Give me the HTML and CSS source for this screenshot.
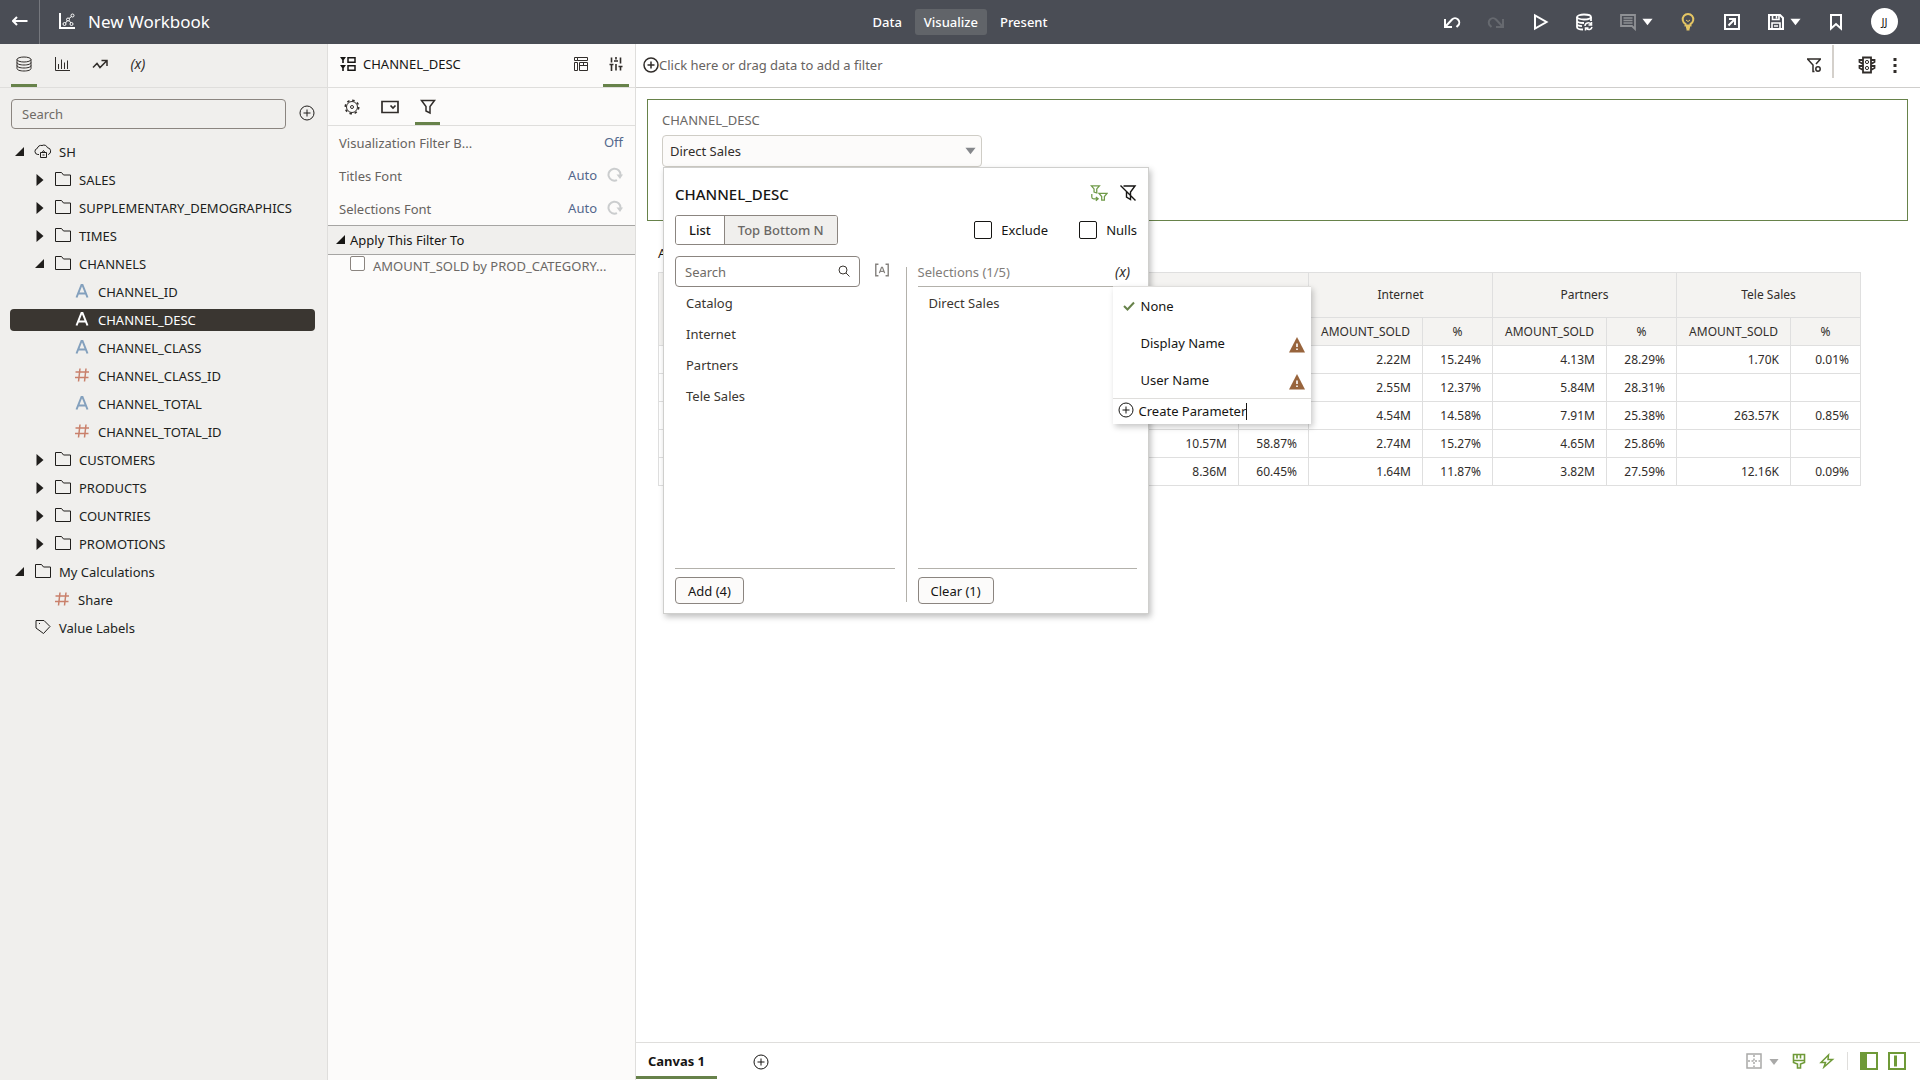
FILE: index.html
```html
<!DOCTYPE html>
<html lang="en">
<head>
<meta charset="UTF-8">
<meta name="viewport" content="width=device-width, initial-scale=1.0">
<title>New Workbook</title>
<link rel="stylesheet" href="styles.css">
</head>
<body>
  <!-- Shared icons -->
  <svg class="sprite" aria-hidden="true">
    <symbol id="plus" viewBox="0 0 16 16"><circle cx="8" cy="8" r="7"/><path d="M8 4.500v7M4.500 8h7"/></symbol>
    <symbol id="folder" viewBox="0 0 18 16"><path d="M1.500 1.500h6l2 2.500h7v10.500h-15z"/></symbol>
    <symbol id="closed" viewBox="0 0 16 16"><path class="fill" d="M4.500 2l7 6-7 6z"/></symbol>
    <symbol id="open" viewBox="0 0 16 16"><path class="fill" d="M12 3v9H3z"/></symbol>
    <symbol id="attr" viewBox="0 0 16 16"><path d="M2.500 14.500L7.500 2h1l5 12.500M4.500 10.500h7"/></symbol>
    <symbol id="measure" viewBox="0 0 16 16"><path d="M6 1.500l-1.500 13M12 1.500l-1.500 13M1.500 5h13.500M1 10.500h13.500"/></symbol>
    <symbol id="caret" viewBox="0 0 12 8"><path class="fill" d="M.5 .5h11L6 7.500z"/></symbol>
    <symbol id="reset" viewBox="0 0 16 16"><path d="M10 13.200A6 6 0 1 1 13.500 8"/><path class="fill" d="M9.500 7.500h6.500l-3 4.500z"/></symbol>
    <symbol id="warn" viewBox="0 0 16 16"><path fill="#98643c" stroke="none" d="M8 0l8 15.500H0z"/><path stroke="#fff" stroke-width="1.600" d="M8 6.500v3.500M8 11.500v1.500"/></symbol>
  </svg>

  <header class="topbar">
    <div class="topbar-left">
      <button class="back" aria-label="Go back"><svg viewBox="0 0 16 16"><path stroke-width="2" d="M1 8h14.500M5 4L1 8l4 4"/></svg></button>
      <svg class="wb-icon" viewBox="0 0 18 18"><path stroke-width="2" d="M2 1v15h15"/><circle cx="6.500" cy="12" r="1.500"/><circle cx="10" cy="7.500" r="1.500"/><circle cx="13.500" cy="12" r="1.500"/><circle cx="14.500" cy="3.500" r="1.500"/><path d="M7.500 11l2-2.500M11 6.500l2.500-2M11 8.500l2 2.500"/></svg>
      <h1>New Workbook</h1>
    </div>
    <nav class="modes">
      <button>Data</button>
      <button class="active">Visualize</button>
      <button>Present</button>
    </nav>
    <div class="topbar-right">
      <button aria-label="Undo"><svg viewBox="0 0 18 18"><path stroke-width="2" d="M2 6v8h7M2.500 13.500L9 6.500a4 4 0 0 1 6 6l-1.500 1.500"/></svg></button>
      <button class="dim" aria-label="Redo"><svg viewBox="0 0 18 18"><path stroke-width="2" d="M16 6v8H9M15.500 13.500L9 6.500a4 4 0 0 0-6 6l1.500 1.500"/></svg></button>
      <button aria-label="Preview"><svg viewBox="0 0 18 18"><path stroke-width="2" d="M4 2.500v13L15.500 9z"/></svg></button>
      <button aria-label="Refresh data"><svg viewBox="0 0 18 18"><ellipse cx="9" cy="4" rx="7" ry="2.500" stroke-width="1.800"/><path stroke-width="1.800" d="M2 4v10c0 1.500 3 2.500 6 2.500M2 7.500c0 1.500 3 2.500 7 2.500M2 11c0 1.200 2.500 2 5 2.200M16 4v4"/><path stroke-width="1.500" d="M10 13a3.200 3.200 0 0 1 6-1.500M16.500 9v3h-3M17 14a3.200 3.200 0 0 1-5.500 1.500M10.500 17.500V15h3"/></svg></button>
      <div class="split grey">
        <button aria-label="Comments"><svg viewBox="0 0 18 18"><path stroke-width="1.800" d="M2 2h14v14l-3-3H2z"/><path stroke-width="1.300" d="M4.500 5h9M4.500 7.500h9M4.500 10h9"/></svg></button>
        <button class="drop" aria-label="Comment options"><svg><use href="#caret"/></svg></button>
      </div>
      <button class="gold" aria-label="Insights"><svg viewBox="0 0 18 18"><path stroke-width="2" d="M6.500 12.500V11A5.300 5.300 0 1 1 11.500 11v1.500zM7 14.500h4M7.500 16.500h3"/><path d="M7 7l2 1.500L11 7"/></svg></button>
      <button aria-label="Export"><svg viewBox="0 0 18 18"><path stroke-width="2" d="M2 2h14v14H2zM6 6h6v6M12 6l-6.500 6.500"/></svg></button>
      <div class="split">
        <button aria-label="Save"><svg viewBox="0 0 18 18"><path stroke-width="2" d="M2 2h11l3 3v11H2z"/><path stroke-width="1.600" d="M5.500 2v4.500h6.500V2M9.500 3v2.500M5 16v-6h8v6M7 13h4"/></svg></button>
        <button class="drop" aria-label="Save options"><svg><use href="#caret"/></svg></button>
      </div>
      <button aria-label="Bookmark"><svg viewBox="0 0 18 18"><path stroke-width="2" d="M4 2h10v13.500l-5-4.500-5 4.500z"/></svg></button>
      <button class="avatar">JJ</button>
    </div>
  </header>

  <div class="workspace">
    <!-- Data panel -->
    <aside class="data-panel">
      <div class="tabs">
        <button class="active" aria-label="Data"><svg viewBox="0 0 16 16"><ellipse cx="8" cy="3.500" rx="7" ry="2.500"/><path d="M1 3.500v9C1 14 4 15 8 15s7-1 7-2.500v-9M1 6.500C1 8 4 9 8 9s7-1 7-2.500M1 9.500C1 11 4 12 8 12s7-1 7-2.500"/></svg></button>
        <button aria-label="Visualizations"><svg viewBox="0 0 16 16"><path d="M1.500 1v13.500H16M4.500 13V8M7.500 13V3.500M10.500 13V6.500M13.500 13V4.500"/></svg></button>
        <button aria-label="Analytics"><svg viewBox="0 0 16 16"><path stroke-width="1.500" d="M1 11.500l4-4 3 4L14.500 5M9.500 4.500h5.500V10"/></svg></button>
        <button class="fx" aria-label="Parameters">(x)</button>
      </div>
      <div class="search-row">
        <input type="text" placeholder="Search" aria-label="Search data">
        <button aria-label="Add data"><svg><use href="#plus"/></svg></button>
      </div>
      <ul class="tree">
        <li><svg class="toggle"><use href="#open"/></svg><svg viewBox="0 0 18 16"><path d="M5 11.500H3.800A3.100 3.100 0 0 1 3.300 5.400 3.800 3.800 0 0 1 8 2.500 4.300 4.300 0 0 1 13.500 4.700a3.500 3.500 0 0 1 .8 6.800H14"/><path d="M6.500 9.500h6v5h-6zM8 9.500l1.500-2 1.500 2M8.500 12h2"/></svg>SH</li>
        <li class="l1"><svg class="toggle"><use href="#closed"/></svg><svg><use href="#folder"/></svg>SALES</li>
        <li class="l1"><svg class="toggle"><use href="#closed"/></svg><svg><use href="#folder"/></svg>SUPPLEMENTARY_DEMOGRAPHICS</li>
        <li class="l1"><svg class="toggle"><use href="#closed"/></svg><svg><use href="#folder"/></svg>TIMES</li>
        <li class="l1"><svg class="toggle"><use href="#open"/></svg><svg><use href="#folder"/></svg>CHANNELS</li>
        <li class="l2"><svg class="attr"><use href="#attr"/></svg>CHANNEL_ID</li>
        <li class="l2 selected"><svg class="attr"><use href="#attr"/></svg>CHANNEL_DESC</li>
        <li class="l2"><svg class="attr"><use href="#attr"/></svg>CHANNEL_CLASS</li>
        <li class="l2"><svg class="measure"><use href="#measure"/></svg>CHANNEL_CLASS_ID</li>
        <li class="l2"><svg class="attr"><use href="#attr"/></svg>CHANNEL_TOTAL</li>
        <li class="l2"><svg class="measure"><use href="#measure"/></svg>CHANNEL_TOTAL_ID</li>
        <li class="l1"><svg class="toggle"><use href="#closed"/></svg><svg><use href="#folder"/></svg>CUSTOMERS</li>
        <li class="l1"><svg class="toggle"><use href="#closed"/></svg><svg><use href="#folder"/></svg>PRODUCTS</li>
        <li class="l1"><svg class="toggle"><use href="#closed"/></svg><svg><use href="#folder"/></svg>COUNTRIES</li>
        <li class="l1"><svg class="toggle"><use href="#closed"/></svg><svg><use href="#folder"/></svg>PROMOTIONS</li>
        <li><svg class="toggle"><use href="#open"/></svg><svg><use href="#folder"/></svg>My Calculations</li>
        <li class="l1 leaf"><svg class="measure"><use href="#measure"/></svg>Share</li>
        <li class="leaf"><svg viewBox="0 0 18 16"><path d="M2 1.500h8l6 6-6.500 7L2 9z"/><path d="M5 4.500h1"/></svg>Value Labels</li>
      </ul>
    </aside>

    <!-- Properties panel -->
    <aside class="props-panel">
      <div class="tabs props-head">
        <svg viewBox="0 0 16 16"><path class="fill" d="M0 1h6L3.800 4v3H2.200V4zM0 9h6l-2.200 3v3H2.200v-3z"/><path stroke-width="1.500" d="M8 1.800h7v4.500H8zM8 9.800h7v4.500H8z"/></svg>
        <h2>CHANNEL_DESC</h2>
        <button aria-label="Grammar"><svg viewBox="0 0 16 16"><path d="M1.500 1.500h3v3h-3zM4.500 1.500h10v3h-10zM1.500 6.500h3v8h-3zM6.500 6.500h8v8h-8zM6.500 9.500h8M10.500 6.500v3"/></svg></button>
        <button class="active" aria-label="Properties"><svg viewBox="0 0 16 16"><path stroke-width="1.600" d="M3.500 1.500v5M3.500 9v6M8 1v2.500M8 8v6.500M12.500 1.500v6M12.500 11v3.500M1.500 8.500h4M6 5h4M10.500 10.500h4"/></svg></button>
      </div>
      <div class="subtabs">
        <button aria-label="General"><svg viewBox="0 0 16 16"><circle cx="8" cy="8" r="5.500"/><circle cx="8" cy="8" r="1.500"/><circle cx="8" cy="8" r="6.700" stroke-dasharray="2.500 2.760" stroke-width="1.600"/></svg></button>
        <button aria-label="Control"><svg viewBox="0 0 18 16"><path stroke-width="1.700" d="M1 2.500h16v11H1zM9.500 6.500l2.500 2.500 2.500-2.500"/></svg></button>
        <button class="active" aria-label="Filter"><svg viewBox="0 0 16 16"><path stroke-width="1.500" d="M1.500 1.500h13L10 7.500V14L6 12V7.500z"/></svg></button>
      </div>
      <div class="prop"><span>Visualization Filter B...</span><a href="#">Off</a></div>
      <div class="prop"><span>Titles Font</span><a href="#">Auto</a><button aria-label="Reset titles font"><svg><use href="#reset"/></svg></button></div>
      <div class="prop"><span>Selections Font</span><a href="#">Auto</a><button aria-label="Reset selections font"><svg><use href="#reset"/></svg></button></div>
      <button class="section"><svg><use href="#open"/></svg>Apply This Filter To</button>
      <div class="apply"><input type="checkbox" id="applyTo"><label for="applyTo">AMOUNT_SOLD by PROD_CATEGORY...</label></div>
    </aside>

    <!-- Canvas -->
    <main class="canvas">
      <div class="filter-bar">
        <button class="add-filter"><svg><use href="#plus"/></svg>Click here or drag data to add a filter</button>
        <button aria-label="Filter settings"><svg viewBox="0 0 16 16"><path stroke-width="1.500" d="M1 2h14M1.500 2L7 8v6.500h1.500M14.500 2L10 7"/><circle cx="12" cy="12" r="2.200" stroke-width="1.500"/></svg></button>
        <div class="bar-line"></div>
        <button aria-label="Brushing"><svg viewBox="0 0 18 18"><path stroke-width="1.800" d="M5 1.500h8v15H5zM5 4H1.500v2L5 8M5 10H1.500v2L5 14M13 4h3.500v2L13 8M13 10h3.500v2L13 14"/><circle cx="9" cy="6" r="1.600"/><circle cx="9" cy="12" r="1.600"/></svg></button>
        <button aria-label="Menu"><svg viewBox="0 0 16 16"><path class="fill" d="M6.500 1h3v3h-3zM6.500 7h3v3h-3zM6.500 13h3v3h-3z"/></svg></button>
      </div>

      <div class="stage">
        <section class="filter-viz">
          <label for="channel">CHANNEL_DESC</label>
          <div class="dropdown">
            <select id="channel"><option>Direct Sales</option></select>
            <svg><use href="#caret"/></svg>

            <div class="popup">
              <div class="popup-head">
                <h3>CHANNEL_DESC</h3>
                <button class="green" aria-label="Limit values"><svg viewBox="0 0 20 18"><path stroke-width="1.400" d="M1.500 1h9L7.500 4.500V9l-3-1V4.500zM10 9.500h9l-3 3.500v4h-3v-4zM2 10v3.500c0 1.500 1 2 2 2h4.500M6.500 13.500l2.500 2-2.500 2"/></svg></button>
                <button aria-label="Clear filter"><svg viewBox="0 0 18 18"><path stroke-width="1.400" d="M4.500 2H16l-4.500 6v7.500L7.500 13V7M1.500 1.500l15 15"/></svg></button>
              </div>
              <div class="popup-modes">
                <div class="segmented"><button class="on">List</button><button>Top Bottom N</button></div>
                <label><input type="checkbox">Exclude</label>
                <label><input type="checkbox">Nulls</label>
              </div>
              <div class="lists">
                <div class="column">
                  <div class="column-head">
                    <div class="find">
                      <input type="text" placeholder="Search" aria-label="Search values">
                      <svg viewBox="0 0 12 12"><circle cx="5" cy="5" r="4"/><path d="M8 8l3.500 3.500"/></svg>
                    </div>
                    <button class="match" aria-label="Match case"><svg viewBox="0 0 18 16"><path stroke-width="1.600" d="M5 1.500H2v13h3M13 1.500h3v13h-3"/><path stroke-width="1.400" d="M6 11.500L8.500 5h1L12 11.500M7 9.500h4"/></svg></button>
                  </div>
                  <ul>
                    <li>Catalog</li>
                    <li>Internet</li>
                    <li>Partners</li>
                    <li>Tele Sales</li>
                  </ul>
                  <button class="action">Add (4)</button>
                </div>
                <div class="divider"></div>
                <div class="column">
                  <div class="column-head ruled">
                    <span>Selections (1/5)</span>
                    <button class="fx" aria-label="Bind to parameter">(x)</button>
                    <div class="menu">
                      <button><svg class="check" viewBox="0 0 12 12"><path stroke-width="2" d="M1 6l3.500 3.500L11 2.500"/></svg>None</button>
                      <button class="indent">Display Name<svg class="warn"><use href="#warn"/></svg></button>
                      <button class="indent">User Name<svg class="warn"><use href="#warn"/></svg></button>
                      <button class="create"><svg><use href="#plus"/></svg><span>Create Parameter</span></button>
                    </div>
                  </div>
                  <ul>
                    <li>Direct Sales</li>
                  </ul>
                  <button class="action">Clear (1)</button>
                </div>
              </div>
            </div>
          </div>
        </section>

        <section class="table-viz">
          <h2>AMOUNT_SOLD by PROD_CATEGORY</h2>
          <table>
            <colgroup>
              <col>
              <col class="amount"><col class="pct">
              <col class="amount"><col class="pct">
              <col class="amount"><col class="pct">
              <col class="amount"><col class="pct">
            </colgroup>
            <thead>
              <tr><th rowspan="2"></th><th colspan="2"></th><th colspan="2">Internet</th><th colspan="2">Partners</th><th colspan="2">Tele Sales</th></tr>
              <tr><th></th><th></th><th>AMOUNT_SOLD</th><th>%</th><th>AMOUNT_SOLD</th><th>%</th><th>AMOUNT_SOLD</th><th>%</th></tr>
            </thead>
            <tbody>
              <tr><td></td><td></td><td></td><td>2.22M</td><td>15.24%</td><td>4.13M</td><td>28.29%</td><td>1.70K</td><td>0.01%</td></tr>
              <tr><td></td><td></td><td></td><td>2.55M</td><td>12.37%</td><td>5.84M</td><td>28.31%</td><td></td><td></td></tr>
              <tr><td></td><td></td><td></td><td>4.54M</td><td>14.58%</td><td>7.91M</td><td>25.38%</td><td>263.57K</td><td>0.85%</td></tr>
              <tr><td></td><td>10.57M</td><td>58.87%</td><td>2.74M</td><td>15.27%</td><td>4.65M</td><td>25.86%</td><td></td><td></td></tr>
              <tr><td></td><td>8.36M</td><td>60.45%</td><td>1.64M</td><td>11.87%</td><td>3.82M</td><td>27.59%</td><td>12.16K</td><td>0.09%</td></tr>
            </tbody>
          </table>
        </section>
      </div>

      <footer class="canvas-tabs">
        <button class="canvas-tab">Canvas 1</button>
        <button class="add-canvas" aria-label="Add canvas"><svg><use href="#plus"/></svg></button>
        <div class="view-tools">
          <button class="muted" aria-label="Grid"><svg viewBox="0 0 16 16"><path stroke-width="1.500" d="M1 1h14v14H1z"/><path stroke-width="1.500" stroke-dasharray="2 1.500" d="M8 2v12M2 8h12"/></svg></button>
          <button class="muted drop" aria-label="Grid options"><svg><use href="#caret"/></svg></button>
          <button aria-label="Format"><svg viewBox="0 0 16 16"><path stroke-width="1.600" d="M2.500 1.500h11v8L9.500 11v4h-3v-4l-4-1.500zM6 1.500v4M9.500 1.500v4M2.500 7.500h11"/></svg></button>
          <button aria-label="Auto apply"><svg viewBox="0 0 16 16"><path stroke-width="1.500" d="M9.500 2L2 9.500h4.500L5 14l8.500-7.500H9z"/></svg></button>
          <div class="tool-line"></div>
          <button class="big" aria-label="Toggle data panel"><svg viewBox="0 0 18 18"><path stroke-width="2" d="M1 1h16v16H1z"/><path class="fill" d="M1 1h6v16H1z"/></svg></button>
          <button class="big" aria-label="Toggle grammar panel"><svg viewBox="0 0 18 18"><path stroke-width="2" d="M1 1h16v16H1z"/><path class="fill" d="M6 3.500h3v11H6z"/></svg></button>
        </div>
      </footer>
    </main>
  </div>
</body>
</html>
```
FILE: styles.css
```css
* {
  box-sizing: border-box;
}

body {
  margin: 0;
  height: 100vh;
  display: flex;
  flex-direction: column;
  font-family: "Noto Sans", "Open Sans", sans-serif;
  font-size: 13px;
  line-height: 20px;
  color: #161513;
  background: #fff;
  overflow: hidden;
}

h1, h2, h3, ul {
  margin: 0;
  padding: 0;
  font-weight: normal;
}

ul {
  list-style: none;
}

button {
  padding: 0;
  border: 0;
  background: none;
  font: inherit;
  color: inherit;
  display: flex;
  align-items: center;
  cursor: pointer;
}

input, select {
  font: inherit;
  color: inherit;
  margin: 0;
}

a {
  text-decoration: none;
}

svg {
  display: block;
  width: 16px;
  height: 16px;
  flex: none;
  fill: none;
  stroke: currentColor;
}

.fill {
  fill: currentColor;
  stroke: none;
}

.sprite {
  position: absolute;
  width: 0;
  height: 0;
}

.fx {
  font-size: 14px;
  font-style: italic;
}

/* Top bar */
.topbar {
  height: 44px;
  flex: none;
  display: grid;
  grid-template-columns: 1fr auto 1fr;
  align-items: center;
  background: #4a4d55;
  color: #fff;
}

.topbar-left {
  display: flex;
  align-items: center;
  height: 100%;
}

.back {
  width: 40px;
  height: 100%;
  padding-bottom: 2px;
  justify-content: center;
  border-right: 1px solid #75777d;
}

.wb-icon {
  width: 18px;
  height: 18px;
  margin: 0 12px 2px 18px;
}

.topbar h1 {
  font-size: 17px;
}

.modes {
  display: flex;
  gap: 4px;
}

.modes button {
  height: 26px;
  padding: 0 9px;
  border-radius: 3px;
  font-weight: 500;
}

.modes .active {
  background: #616469;
}

.topbar-right {
  display: flex;
  align-items: center;
  justify-content: flex-end;
  gap: 26px;
  padding: 0 22px 1px 0;
}

.topbar-right svg {
  width: 18px;
  height: 18px;
}

.split {
  display: flex;
  align-items: center;
  gap: 5px;
}

.topbar-right .drop svg {
  width: 11px;
  height: 8px;
}

.dim {
  color: #66696f;
}

.grey button:first-child {
  color: #8f9195;
}

.gold {
  color: #e5c664;
}

.avatar {
  width: 27px;
  height: 27px;
  border-radius: 50%;
  justify-content: center;
  background: #fff;
  color: #161513;
  font-size: 11px;
}

/* Side panels */
.workspace {
  flex: 1;
  min-height: 0;
  display: flex;
}

.data-panel {
  width: 328px;
  flex: none;
  background: #f0efed;
  border-right: 1px solid #dfdedc;
  color: #201e1c;
}

.tabs {
  height: 44px;
  display: flex;
  border-bottom: 1px solid #dfdedc;
  padding-left: 11px;
  gap: 12px;
}

.tabs button {
  width: 26px;
  padding-bottom: 4px;
  justify-content: center;
  border-bottom: 3px solid transparent;
  border-top: 3px solid transparent;
  color: #312d2a;
}

.tabs .active, .subtabs .active {
  border-bottom-color: #67824a;
}

.search-row {
  display: flex;
  align-items: center;
  gap: 13px;
  padding: 11px 12px 11px 11px;
}

.search-row input {
  flex: 1;
  min-width: 0;
  height: 30px;
  padding: 0 10px;
  border: 1px solid #8b8580;
  border-radius: 4px;
  background: transparent;
}

.search-row button {
  padding-bottom: 3px;
}

::placeholder {
  color: #6f6b66;
  opacity: 1;
}

.tree {
  padding-top: 1px;
}

.tree li {
  height: 22px;
  margin: 0 12px 6px 10px;
  display: flex;
  align-items: center;
  gap: 7px;
  border-radius: 4px;
}

.tree svg {
  width: 18px;
  margin-bottom: 2px;
}

.tree .toggle {
  width: 16px;
  margin: 0 -1px 0 2px;
}

.tree .l1 {
  padding-left: 20px;
}

.tree .l2 {
  padding-left: 63px;
}

.tree .leaf {
  padding-left: 24px;
}

.tree .l1.leaf {
  padding-left: 43px;
}

.tree .attr {
  color: #83a0bd;
  stroke-width: 2;
}

.tree .measure {
  color: #c9806b;
  stroke-width: 1.5;
}

.tree .selected, .tree .selected .attr {
  background: #3a3631;
  color: #fff;
}

.props-panel {
  width: 308px;
  flex: none;
  background: #fcfbfa;
  border-right: 1px solid #dfdedc;
}

.props-head {
  align-items: center;
  padding: 0 6px 0 12px;
  gap: 9px;
}

.props-head h2 {
  flex: 1;
  margin: 0 0 3px -2px;
  font-size: 13px;
}

.props-head > svg {
  margin-bottom: 3px;
}

.props-head button {
  height: 100%;
}

.subtabs {
  height: 38px;
  display: flex;
  gap: 13px;
  padding-left: 11px;
  border-bottom: 1px solid #dfdedc;
}

.subtabs button {
  width: 25px;
  justify-content: center;
  border-top: 3px solid transparent;
  border-bottom: 3px solid transparent;
  color: #312d2a;
}

.subtabs svg[viewBox="0 0 18 16"] {
  width: 18px;
}

.prop {
  height: 33px;
  display: flex;
  align-items: center;
  padding: 0 12px 0 11px;
  gap: 10px;
  color: #67635f;
}

.prop span {
  flex: 1;
}

.prop a {
  color: #53678c;
}

.prop a, .prop button {
  padding-bottom: 2px;
}

.prop button {
  color: #cbcdce;
  stroke-width: 2;
}

.section {
  width: 100%;
  height: 30px;
  padding-left: 5px;
  gap: 1px;
  background: #f0efed;
  border: solid #a6a5a3;
  border-width: 1px 0;
}

.apply {
  display: flex;
  gap: 8px;
  padding: 1px 0 0 22px;
  color: #6b6865;
}

input[type="checkbox"] {
  appearance: none;
  width: 15px;
  height: 15px;
  border: 1px solid #8b8580;
  border-radius: 2px;
  background: #fff;
}

/* Canvas */
.canvas {
  flex: 1;
  min-width: 0;
  display: flex;
  flex-direction: column;
}

.filter-bar {
  height: 44px;
  flex: none;
  display: flex;
  align-items: center;
  padding: 0 17px 2px 0;
  border-bottom: 1px solid #cfcecc;
  color: #312d2a;
}

.add-filter {
  margin-right: auto;
  padding-left: 7px;
  color: #67635f;
}

.add-filter svg {
  color: #312d2a;
  stroke-width: 1.5;
}

.bar-line {
  align-self: flex-start;
  width: 2px;
  height: 33px;
  margin: 1px 24px 0 10px;
  background: #d4d0cb;
}

.filter-bar .bar-line + button {
  margin-right: 11px;
}

.filter-bar .bar-line + button svg {
  width: 18px;
  height: 18px;
}

.stage {
  flex: 1;
  min-height: 0;
  padding: 11px 12px 0 11px;
}

.filter-viz {
  height: 122px;
  padding: 10px 14px;
  border: 1px solid #67824a;
}

.filter-viz > label {
  display: block;
  margin-bottom: 5px;
  color: #6b6865;
}

.dropdown {
  position: relative;
  width: 320px;
}

.dropdown select {
  display: block;
  width: 100%;
  height: 32px;
  padding: 0 7px;
  appearance: none;
  border: 1px solid #cfcdc6;
  border-radius: 4px;
  background: #fcfbfa;
  color: #312d2a;
}

.dropdown > svg {
  position: absolute;
  top: 12px;
  right: 6px;
  width: 11px;
  height: 8px;
  color: #85878b;
}

/* Filter popup */
.popup {
  position: absolute;
  top: 32px;
  left: 1px;
  z-index: 2;
  width: 486px;
  padding: 11px 11px 9px;
  border: 1px solid #cfcfcd;
  background: #fff;
  box-shadow: 2px 3px 6px rgba(0, 0, 0, 0.25);
}

.popup-head {
  display: flex;
  align-items: center;
  height: 29px;
  gap: 11px;
}

.popup-head h3 {
  flex: 1;
  font-size: 15px;
  font-weight: 500;
}

.popup-head svg {
  width: 18px;
  height: 18px;
}

.popup-head button {
  padding-bottom: 2px;
}

.green {
  color: #6f9a48;
}

.popup-modes {
  display: flex;
  align-items: center;
  margin: 7px 0 11px;
}

.segmented {
  display: flex;
  height: 30px;
  margin-right: auto;
  border: 1px solid #8b8580;
  border-radius: 3px;
  overflow: hidden;
}

.segmented button {
  padding: 0 13px;
  background: #f0efed;
  color: #6b6865;
  font-weight: 500;
}

.segmented .on {
  background: #fff;
  color: #161513;
  border-right: 1px solid #8b8580;
}

.popup-modes label {
  display: flex;
  align-items: center;
  gap: 9px;
  margin-left: 31px;
}

.popup-modes input {
  width: 18px;
  height: 18px;
  border-color: #161513;
}

.lists {
  display: flex;
  gap: 11px;
}

.column {
  flex: 1;
  min-width: 0;
  color: #3a3631;
}

.column-head {
  position: relative;
  height: 31px;
  display: flex;
  align-items: center;
  gap: 14px;
}

.column-head.ruled {
  justify-content: space-between;
  padding: 2px 7px 0 0;
  border-bottom: 1px solid #b3b1ab;
  color: #817d79;
}

.ruled .fx {
  color: #312d2a;
}

.find {
  position: relative;
  width: 185px;
}

.find input {
  width: 100%;
  height: 31px;
  padding: 0 9px;
  border: 1px solid #8b8580;
  border-radius: 4px;
}

.find svg {
  position: absolute;
  top: 9px;
  right: 10px;
  width: 12px;
  height: 12px;
}

.match {
  padding-bottom: 3px;
  color: #85827e;
}

.column ul {
  height: 282px;
  border-bottom: 1px solid #b3b1ab;
}

.column li {
  height: 31px;
  padding: 6px 11px;
}

.action {
  height: 27px;
  margin-top: 8px;
  padding: 0 12px;
  border: 1px solid #8b8580;
  border-radius: 4px;
  background: #fcfbfa;
  color: #161513;
}

.divider {
  width: 1px;
  margin: 11px 0 2px;
  background: #b3b1ab;
}

.menu {
  position: absolute;
  top: 30px;
  left: 195px;
  z-index: 3;
  width: 198px;
  background: #fff;
  color: #161513;
  border-top: 1px solid #dfdedc;
  box-shadow: 2px 3px 6px rgba(0, 0, 0, 0.22);
}

.menu button {
  width: 100%;
  height: 37px;
  padding: 0 6px 0 10px;
  gap: 6px;
}

.menu .indent {
  padding-left: 28px;
  justify-content: space-between;
}

.menu .check {
  width: 12px;
  height: 12px;
  color: #67824a;
}

.menu .warn {
  margin-top: 5px;
}

.menu .create {
  height: 26px;
  padding-left: 5px;
  gap: 5px;
  border-top: 1px solid #dfdedc;
}

.create svg {
  margin-bottom: 3px;
}

.create span {
  line-height: 17px;
  border-right: 1px solid #161513;
}

/* Table */
.table-viz {
  padding: 22px 47px 0 11px;
}

.table-viz h2 {
  margin-bottom: 9px;
  font-size: 13px;
}

table {
  width: 100%;
  table-layout: fixed;
  border-collapse: collapse;
  font-size: 12px;
  color: #312d2a;
}

.amount {
  width: 114px;
}

.pct {
  width: 70px;
}

th, td {
  height: 28px;
  padding: 0 11px;
  border: 1px solid #dfdfdf;
  font-weight: normal;
  text-align: right;
  white-space: nowrap;
}

th {
  background: #f4f3f1;
  text-align: center;
}

thead tr:first-child {
  height: 45px;
}

/* Canvas tabs */
.canvas-tabs {
  height: 38px;
  flex: none;
  display: flex;
  align-items: stretch;
  border-top: 1px solid #dfdedc;
}

.canvas-tab {
  width: 81px;
  justify-content: center;
  margin-bottom: 1px;
  border-top: 3px solid transparent;
  border-bottom: 3px solid #67824a;
  font-weight: bold;
}

.add-canvas {
  margin-left: 36px;
}

.view-tools {
  margin-left: auto;
  padding: 0 14px 2px 0;
  display: flex;
  align-items: center;
  gap: 12px;
  color: #6f9a38;
}

.view-tools .drop {
  margin: 2px 0 0 -5px;
}

.view-tools .drop svg {
  width: 10px;
  height: 8px;
}

.view-tools .big svg {
  width: 18px;
  height: 18px;
}

.view-tools .big + .big {
  margin-left: -2px;
}

.muted {
  color: #a9a9a8;
}

.tool-line {
  width: 1px;
  height: 18px;
  background: #dfdedc;
}
```
